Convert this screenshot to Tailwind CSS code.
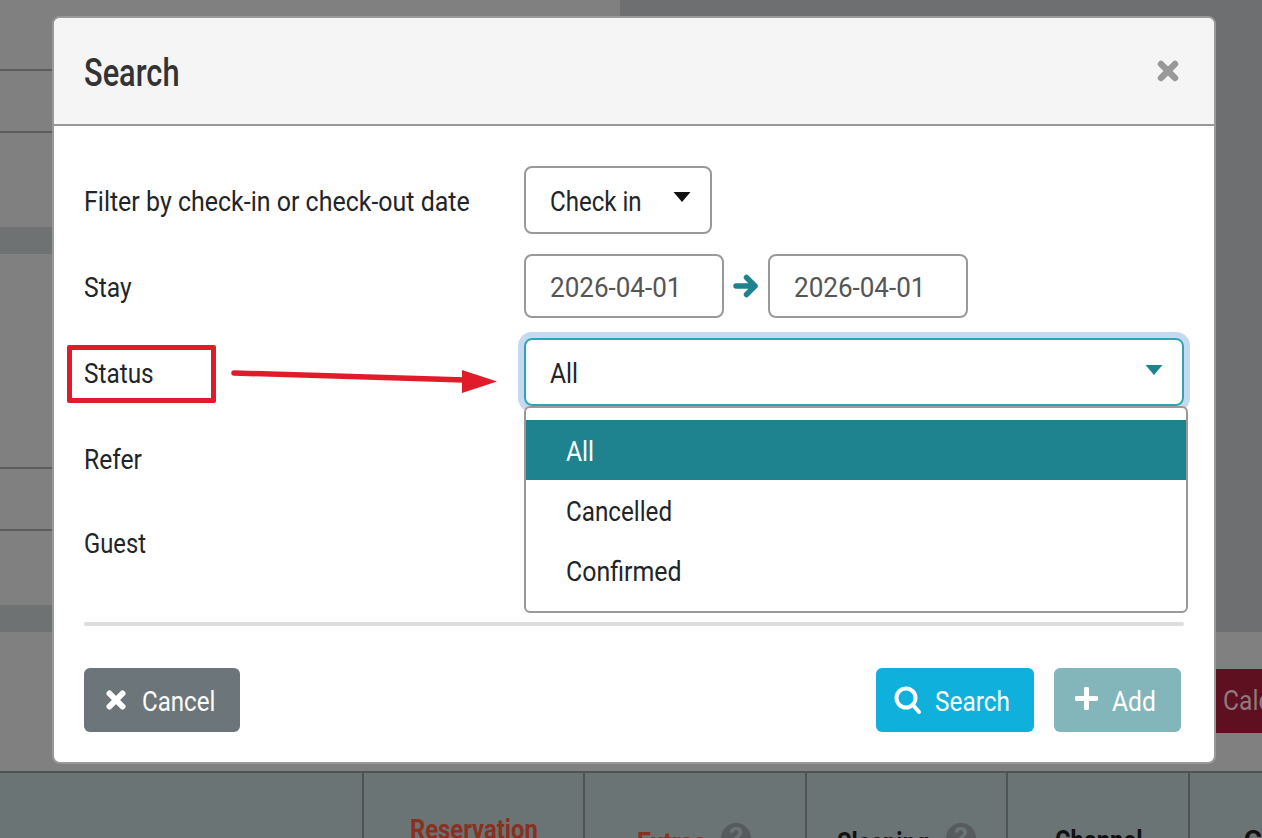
<!DOCTYPE html>
<html lang="en">
<head>
<meta charset="utf-8">
<title>Search</title>
<script src="https://cdn.jsdelivr.net/npm/@tailwindcss/browser@4"></script>
</head>
<body class="m-0 overflow-hidden">
<div class="relative w-[1262px] h-[838px] overflow-hidden bg-[#808080] font-['Roboto',sans-serif] text-[28px] text-[#212529]">

  <!-- dimmed page behind -->
  <div class="flex h-[632px]">
    <div class="w-[620px] flex flex-col">
      <div class="h-[71px] border-b-2 border-[#5c5c5c]"></div>
      <div class="h-[62px] border-b-2 border-[#5c5c5c]"></div>
      <div class="h-[94px]"></div>
      <div class="h-[27px] bg-[#6e7272]"></div>
      <div class="h-[215px] border-b-2 border-[#5c5c5c]"></div>
      <div class="h-[62px] border-b-2 border-[#5c5c5c]"></div>
      <div class="h-[74px]"></div>
      <div class="h-[27px] bg-[#6e7272]"></div>
    </div>
    <div class="flex-1 bg-[#6e6f70]"></div>
  </div>
  <div class="h-[139px] pt-[37px] flex justify-end">
    <div class="w-[46px] h-[64px] bg-[#5f1020] text-[#8f7a7d] flex items-center pl-[7px] overflow-hidden"><span class="inline-block origin-left scale-x-[.88]">Calc</span></div>
  </div>
  <div class="h-[67px] bg-[#6b7474] border-t-2 border-[#4e5455] flex font-bold whitespace-nowrap">
    <div class="w-[362px]"></div>
    <div class="w-[222px] border-l-2 border-[#4e5455] pt-[43px] pl-[46px] text-[#8a3020] leading-none"><span class="inline-block origin-left scale-x-[.85]">Reservation</span></div>
    <div class="w-[222px] border-l-2 border-[#4e5455] pt-[56px] pl-[52px] text-[#8a3020] leading-none flex">
      <span class="inline-block origin-left scale-x-[.88] w-[84px]">Extras</span><span class="w-[30px] h-[30px] -mt-[6px] rounded-full bg-[#565c5d] text-center text-[#6b7474] leading-[30px]">?</span>
    </div>
    <div class="w-[201px] border-l-2 border-[#4e5455] pt-[56px] pl-[30px] text-[#111] leading-none flex">
      <span class="inline-block origin-left scale-x-[.84] w-[109px]">Sleeping</span><span class="w-[30px] h-[30px] -mt-[6px] rounded-full bg-[#565c5d] text-center text-[#6b7474] leading-[30px]">?</span>
    </div>
    <div class="w-[182px] border-l-2 border-[#4e5455] pt-[54px] pl-[47px] text-[#111] leading-none"><span class="inline-block origin-left scale-x-[.85]">Channel</span></div>
    <div class="flex-1 border-l-2 border-[#4e5455] pt-[54px] pl-[54px] text-[#111] leading-none">C</div>
  </div>

  <!-- modal -->
  <div class="absolute left-[52px] top-[16px] w-[1164px] h-[748px] bg-white border-2 border-[#999] rounded-[8px] overflow-hidden flex flex-col">
    <div class="h-[108px] shrink-0 bg-[#f5f5f5] border-b-2 border-[#999] pl-[30px] pr-[35px] flex items-center justify-between">
      <h2 class="text-[38px] font-medium text-[#333] leading-none pt-[4px]"><span class="inline-block origin-left scale-x-[.81]">Search</span></h2>
      <svg class="w-[22px] h-[22px] -mt-[1px]" viewBox="0 0 22 22"><path d="M4 4 L18 18 M18 4 L4 18" stroke="#999" stroke-width="6.5" stroke-linecap="round"/></svg>
    </div>

    <div class="relative flex-1 pl-[30px] pr-[29px] pt-[40px] flex flex-col">
      <div class="flex items-center h-[68px]">
        <label class="w-[440px] leading-none pt-[3px] whitespace-nowrap"><span class="inline-block origin-left scale-x-[.892]">Filter by check-in or check-out date</span></label>
        <div class="w-[188px] h-[68px] border-2 border-[#999] rounded-[8px] flex items-center justify-between pl-[24px] pr-[19px]">
          <span class="inline-block origin-left scale-x-[.86] w-[92px] whitespace-nowrap pt-[4px]">Check in</span>
          <svg class="w-[18px] h-[10px] -mt-[6px]" viewBox="0 0 18 10"><path d="M0.5 0 H17.5 L9 10 Z" fill="#111"/></svg>
        </div>
      </div>
      <div class="flex items-center h-[64px] mt-[20px]">
        <label class="w-[440px] leading-none pt-[3px]"><span class="inline-block origin-left scale-x-[.88]">Stay</span></label>
        <div class="w-[200px] h-[64px] border-2 border-[#999] rounded-[8px] flex items-center pl-[24px] pt-[4px] text-[#555]"><span class="inline-block origin-left scale-x-[.93]">2026-04-01</span></div>
        <svg class="w-[44px] h-[24px]" viewBox="0 0 44 24"><path d="M12 12 H31 M22.500 3.500 L31 12 L22.500 20.500" fill="none" stroke="#1e838f" stroke-width="5.500" stroke-linecap="round" stroke-linejoin="round"/></svg>
        <div class="w-[200px] h-[64px] border-2 border-[#999] rounded-[8px] flex items-center pl-[24px] pt-[4px] text-[#555]"><span class="inline-block origin-left scale-x-[.93]">2026-04-01</span></div>
      </div>
      <div class="flex items-center h-[68px] mt-[20px]">
        <label class="w-[440px] leading-none pt-[3px]"><span class="inline-block origin-left scale-x-[.87]">Status</span></label>
        <div class="w-[660px] h-[68px] border-2 border-[#2ea5b0] rounded-[8px] ring-[6px] ring-[#c5daf0] flex items-center justify-between pl-[24px] pr-[19px]">
          <span class="inline-block origin-left scale-x-[.88] pt-[4px]">All</span>
          <svg class="w-[18px] h-[10px] -mt-[4px]" viewBox="0 0 18 10"><path d="M0.500 0 H17.500 L9 10 Z" fill="#1e838f"/></svg>
        </div>
      </div>
      <label class="mt-[37px] leading-[34px]"><span class="inline-block origin-left scale-x-[.88]">Refer</span></label>
      <label class="mt-[50px] leading-[34px]"><span class="inline-block origin-left scale-x-[.85]">Guest</span></label>

      <!-- open dropdown -->
      <div class="absolute left-[470px] top-[280px] w-[664px] h-[207px] bg-white border-2 border-[#999] rounded-[6px] pt-[12px] flex flex-col">
        <div class="h-[60px] bg-[#1e838f] text-white flex items-center pl-[40px] pt-[4px]"><span class="inline-block origin-left scale-x-[.88]">All</span></div>
        <div class="h-[60px] flex items-center pl-[40px] pt-[4px]"><span class="inline-block origin-left scale-x-[.865]">Cancelled</span></div>
        <div class="h-[60px] flex items-center pl-[40px] pt-[4px]"><span class="inline-block origin-left scale-x-[.89]">Confirmed</span></div>
      </div>

      <!-- annotation -->
      <div class="absolute left-[13px] top-[219px] w-[149px] h-[58px] border-[5px] border-[#e21b2b] rounded-[2px]"></div>
      <svg class="absolute left-[171px] top-[224px] w-[280px] h-[50px]" viewBox="0 0 280 50">
        <path d="M9 23 L240 30" stroke="#e21b2b" stroke-width="5.500" stroke-linecap="round"/>
        <path d="M237 20 L272 31.500 L237 43 Z" fill="#e21b2b"/>
      </svg>
    </div>

    <div class="ml-[30px] mr-[30px] mb-[2px] h-[4px] bg-[#ddd] rounded-full shrink-0"></div>
    <div class="flex justify-between pl-[30px] pr-[33px] pt-[40px] h-[134px] shrink-0 text-white">
      <button class="w-[156px] h-[64px] rounded-[6px] bg-[#6c7579] flex items-center pl-[22px] gap-[16px] whitespace-nowrap">
        <svg class="w-[20px] h-[20px]" viewBox="0 0 20 20"><path d="M3.500 3.500 L16.500 16.500 M16.500 3.500 L3.500 16.500" stroke="#fff" stroke-width="6" stroke-linecap="round"/></svg>
        <span class="inline-block origin-left scale-x-[.86] pt-[4px]">Cancel</span>
      </button>
      <div class="flex gap-[20px]">
        <button class="w-[158px] h-[64px] rounded-[6px] bg-[#0fb0dc] flex items-center pl-[18px] gap-[13px]">
          <svg class="w-[28px] h-[29px]" viewBox="0 0 28 29"><circle cx="12" cy="12" r="9.500" fill="none" stroke="#fff" stroke-width="4"/><path d="M19 19 L25 26" stroke="#fff" stroke-width="4" stroke-linecap="round"/></svg>
          <span class="inline-block origin-left scale-x-[.87] pt-[4px]">Search</span>
        </button>
        <button class="w-[127px] h-[64px] rounded-[6px] bg-[#82b6bb] flex items-center pl-[21px] gap-[14px]">
          <svg class="w-[23px] h-[23px] -mt-[4px]" viewBox="0 0 23 23"><path d="M11.500 2 V21 M2 11.500 H21" stroke="#fff" stroke-width="5" stroke-linecap="round"/></svg>
          <span class="inline-block origin-left scale-x-[.88] pt-[4px]">Add</span>
        </button>
      </div>
    </div>
  </div>
</div>
</body>
</html>
